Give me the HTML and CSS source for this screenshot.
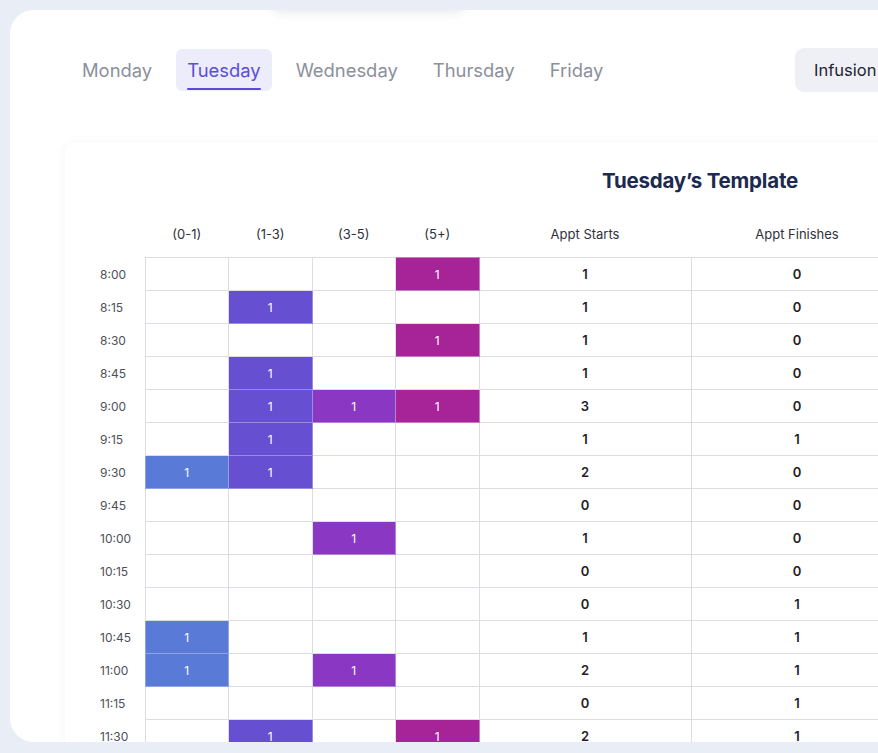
FILE: index.html
```html
<!DOCTYPE html>
<html>
<head>
<meta charset="utf-8">
<link rel="stylesheet" href="styles.css">
</head>
<body>
<div class="panel">
  <div class="top-shadow"></div>
  <div class="toolbar">
    <nav class="tabs">
      <span class="tab">Monday</span>
      <span class="tab active">Tuesday</span>
      <span class="tab">Wednesday</span>
      <span class="tab">Thursday</span>
      <span class="tab">Friday</span>
    </nav>
    <button class="select-btn">Infusion</button>
  </div>
  <section class="card">
    <h2 class="title">Tuesday’s Template</h2>
    <table class="grid">
      <colgroup>
        <col class="c-time"><col class="c-slot"><col class="c-slot"><col class="c-slot"><col class="c-slot"><col class="c-sum"><col class="c-sum">
      </colgroup>
      <thead>
        <tr><th></th><th>(0-1)</th><th>(1-3)</th><th>(3-5)</th><th>(5+)</th><th>Appt Starts</th><th>Appt Finishes</th></tr>
      </thead>
      <tbody>
        <tr><td class="time">8:00</td><td></td><td></td><td></td><td class="s4">1</td><td class="sum">1</td><td class="sum">0</td></tr>
        <tr><td class="time">8:15</td><td></td><td class="s2">1</td><td></td><td></td><td class="sum">1</td><td class="sum">0</td></tr>
        <tr><td class="time">8:30</td><td></td><td></td><td></td><td class="s4">1</td><td class="sum">1</td><td class="sum">0</td></tr>
        <tr><td class="time">8:45</td><td></td><td class="s2">1</td><td></td><td></td><td class="sum">1</td><td class="sum">0</td></tr>
        <tr><td class="time">9:00</td><td></td><td class="s2">1</td><td class="s3">1</td><td class="s4">1</td><td class="sum">3</td><td class="sum">0</td></tr>
        <tr><td class="time">9:15</td><td></td><td class="s2">1</td><td></td><td></td><td class="sum">1</td><td class="sum">1</td></tr>
        <tr><td class="time">9:30</td><td class="s1">1</td><td class="s2">1</td><td></td><td></td><td class="sum">2</td><td class="sum">0</td></tr>
        <tr><td class="time">9:45</td><td></td><td></td><td></td><td></td><td class="sum">0</td><td class="sum">0</td></tr>
        <tr><td class="time">10:00</td><td></td><td></td><td class="s3">1</td><td></td><td class="sum">1</td><td class="sum">0</td></tr>
        <tr><td class="time">10:15</td><td></td><td></td><td></td><td></td><td class="sum">0</td><td class="sum">0</td></tr>
        <tr><td class="time">10:30</td><td></td><td></td><td></td><td></td><td class="sum">0</td><td class="sum">1</td></tr>
        <tr><td class="time">10:45</td><td class="s1">1</td><td></td><td></td><td></td><td class="sum">1</td><td class="sum">1</td></tr>
        <tr><td class="time">11:00</td><td class="s1">1</td><td></td><td class="s3">1</td><td></td><td class="sum">2</td><td class="sum">1</td></tr>
        <tr><td class="time">11:15</td><td></td><td></td><td></td><td></td><td class="sum">0</td><td class="sum">1</td></tr>
        <tr><td class="time">11:30</td><td></td><td class="s2">1</td><td></td><td class="s4">1</td><td class="sum">2</td><td class="sum">1</td></tr>
      </tbody>
    </table>
  </section>
</div>
</body>
</html>
```
FILE: styles.css
```css
html, body {
  margin: 0;
  padding: 0;
}
body {
  width: 878px;
  height: 753px;
  overflow: hidden;
  background: #e9eef6;
  font-family: Inter, "Liberation Sans", sans-serif;
}
.panel {
  position: relative;
  margin: 10px 0 0 10px;
  width: 1400px;
  height: 732px;
  background: #ffffff;
  border-radius: 24px;
  overflow: hidden;
}
.top-shadow {
  position: absolute;
  top: -30px;
  left: 258px;
  width: 200px;
  height: 30px;
  border-radius: 16px;
  box-shadow: 0 3px 10px rgba(40, 50, 80, 0.10);
}
.toolbar {
  display: flex;
  align-items: center;
  width: 850px;
  box-sizing: border-box;
  margin-top: 38px;
  padding-left: 61px;
  height: 44px;
}
.tabs {
  display: flex;
  gap: 13px;
}
.tab {
  position: relative;
  display: block;
  padding: 0 11px;
  height: 42px;
  line-height: 42px;
  font-size: 18.4px;
  color: #8b909c;
  border-radius: 6px;
}
.tab.active {
  background: #ececfb;
  color: #5b4fd3;
}
.tab.active::after {
  content: "";
  position: absolute;
  left: 11px;
  right: 11px;
  bottom: 1px;
  height: 2.5px;
  border-radius: 2px;
  background: #5b4bd6;
}
.select-btn {
  margin-left: auto;
  margin-right: -65px;
  height: 44px;
  padding: 0 19px;
  border: none;
  border-radius: 9px;
  background: #eef0f6;
  font-family: inherit;
  font-size: 16.5px;
  color: #1f2430;
  width: 130px;
  text-align: left;
}
.card {
  margin: 50px 0 0 55px;
  width: 1270px;
  height: 700px;
  background: #fff;
  border-radius: 10px;
  box-shadow: 0 0 10px rgba(40, 50, 80, 0.05);
  padding-top: 27px;
}
.title {
  margin: 0;
  text-align: center;
  font-size: 20.5px;
  line-height: 24px;
  font-weight: 700;
  color: #1b2a4e;
  letter-spacing: -0.2px;
}
.grid {
  margin-top: 28px;
  border-collapse: collapse;
  table-layout: fixed;
  width: 838px;
  font-size: 12px;
}
.c-time { width: 80px; }
.c-slot { width: 83.5px; }
.c-sum { width: 212px; }
.grid th {
  height: 26px;
  font-weight: 400;
  font-size: 13px;
  color: #2f323a;
  text-align: center;
  vertical-align: middle;
  padding: 0 0 10px 0;
}
.grid td {
  height: 32px;
  padding: 0;
  border: 1px solid #dcdde2;
  text-align: center;
  vertical-align: middle;
  color: #fff;
}
.grid td.time {
  border: none;
  text-align: left;
  padding-left: 35px;
  color: #4d5058;
  font-size: 12px;
}
.grid td.sum {
  color: #1f2128;
  font-weight: 600;
  font-size: 13px;
}
.grid td.s1 { background: #5a7ad8; border-color: #8fa4e4; }
.grid td.s2 { background: #674fd1; border-color: #9a8ae0; }
.grid td.s3 { background: #8a37c3; border-color: #b283d8; }
.grid td.s4 { background: #a62497; border-color: #c77cbf; }
```
